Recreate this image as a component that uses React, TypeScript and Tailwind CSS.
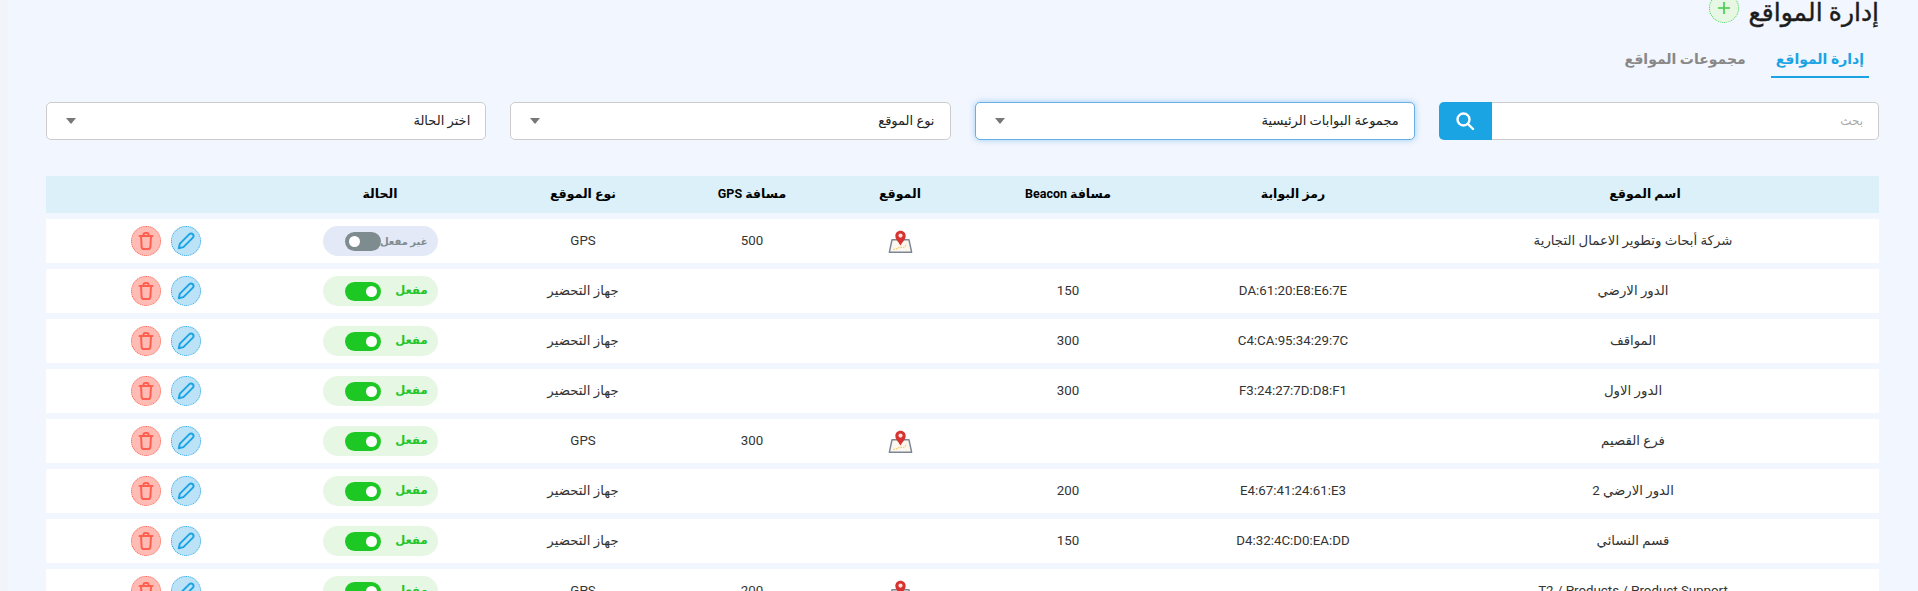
import React from "react";

type Row = { name: string; gate: string; beacon: string; map: boolean; gps: string; type: string; on: boolean };

const rows: Row[] = [
  { name: "شركة أبحاث وتطوير الاعمال التجارية", gate: "", beacon: "", map: true, gps: "500", type: "GPS", on: false },
  { name: "الدور الارضي", gate: "DA:61:20:E8:E6:7E", beacon: "150", map: false, gps: "", type: "جهاز التحضير", on: true },
  { name: "المواقف", gate: "C4:CA:95:34:29:7C", beacon: "300", map: false, gps: "", type: "جهاز التحضير", on: true },
  { name: "الدور الاول", gate: "F3:24:27:7D:D8:F1", beacon: "300", map: false, gps: "", type: "جهاز التحضير", on: true },
  { name: "فرع القصيم", gate: "", beacon: "", map: true, gps: "300", type: "GPS", on: true },
  { name: "الدور الارضي 2", gate: "E4:67:41:24:61:E3", beacon: "200", map: false, gps: "", type: "جهاز التحضير", on: true },
  { name: "قسم النسائي", gate: "D4:32:4C:D0:EA:DD", beacon: "150", map: false, gps: "", type: "جهاز التحضير", on: true },
  { name: "T2 / Products / Product Support", gate: "", beacon: "", map: true, gps: "200", type: "GPS", on: true },
];

const cols = "grid grid-cols-[492px_188px_262px_74px_222px_116px_290px_189px] items-center text-center";

function MapIcon() {
  return (
    <svg width="25" height="24" viewBox="0 0 28 26" className="mx-auto mt-[1px]">
      <path d="M4.5 10.5 H23.5 L26.5 24.5 H1.5 Z" fill="#fbf7ee" stroke="#7d8794" strokeWidth="1.6" strokeLinejoin="round" />
      <path d="M6 21 C9 22 11 19 14 19 C17 19 21 19 20 15" fill="none" stroke="#eebf5a" strokeWidth="1.2" strokeDasharray="1.6 1.2" />
      <path d="M14 0.5 C10.4 0.5 8.2 3.2 8.2 6.2 C8.2 10 12.3 13.5 14 17 C15.7 13.5 19.8 10 19.8 6.2 C19.8 3.2 17.6 0.5 14 0.5 Z" fill="#d8322f" />
      <circle cx="14" cy="5.8" r="2.3" fill="#fbe3e0" />
    </svg>
  );
}

function Toggle({ on }: { on: boolean }) {
  return (
    <div className={`mx-auto flex h-[30px] w-[115px] items-center justify-between rounded-[15px] pr-[10px] pl-[22px] ${on ? "bg-[#e6f8e3]" : "bg-[#e3e9f6]"}`}>
      <span className={`w-[47px] text-right font-bold whitespace-nowrap ${on ? "text-[11.5px] text-[#22c52a]" : "text-[10px] text-[#7f8c8f]"}`}>{on ? "مفعل" : "غير مفعل"}</span>
      <span className={`flex h-[19px] w-[36px] shrink-0 items-center rounded-full px-[4px] ${on ? "justify-start bg-[#1ec824]" : "justify-end bg-[#7f8c8f]"}`}>
        <span className="h-[11px] w-[11px] rounded-full bg-white" />
      </span>
    </div>
  );
}

function Actions() {
  return (
    <div className="flex items-center justify-end gap-[10px] pl-[85px]">
      <button className="flex h-[30px] w-[30px] items-center justify-center rounded-full border border-dotted border-[#1ba4e4] bg-[#bbe2f6]">
        <svg width="20" height="20" viewBox="0 0 20 20" fill="none" stroke="#1ba4e4" strokeWidth="2" strokeLinejoin="round" strokeLinecap="round">
          <path d="M2.8 17.2 L3.9 12.6 L13.4 3.1 C14.3 2.2 15.8 2.2 16.8 3.2 C17.8 4.2 17.8 5.7 16.9 6.6 L7.4 16.1 Z" />
        </svg>
      </button>
      <button className="flex h-[30px] w-[30px] items-center justify-center rounded-full border border-dotted border-[#ff5f50] bg-[#ffbcb5]">
        <svg width="18" height="20" viewBox="0 0 18 20" fill="none" stroke="#ff5f50" strokeWidth="2" strokeLinejoin="round" strokeLinecap="round">
          <path d="M2.5 5 H15.5" />
          <path d="M6.5 5 V3.6 C6.5 2.7 7.2 2 8.1 2 H9.9 C10.8 2 11.5 2.7 11.5 3.6 V5" />
          <path d="M4 5 L4.6 15.8 C4.7 17 5.6 18 6.8 18 H11.2 C12.4 18 13.3 17 13.4 15.8 L14 5" />
        </svg>
      </button>
    </div>
  );
}

function Select({ label, focus }: { label: string; focus?: boolean }) {
  return (
    <div className={`flex h-[38px] items-center justify-between rounded-[5px] border bg-white pr-[15px] pl-[19px] ${focus ? "border-[#66afe9] shadow-[0_0_6px_rgba(102,175,233,0.6)]" : "border-[#cccccc]"}`}>
      <span className="text-[13px] text-[#222]">{label}</span>
      <span className="h-0 w-0 border-x-[5px] border-t-[6px] border-x-transparent border-t-[#777]" />
    </div>
  );
}

export default function App() {
  return (
    <div dir="rtl" className="h-[591px] overflow-hidden border-l-[8px] border-[#f1f5f9] bg-[#f2f6fe] pr-[39px] pl-[38px] text-[#222] [font-family:'Roboto','DejaVu_Sans',sans-serif]">
      <div className="-mt-[7px] flex h-[30px] items-start gap-[9px]">
        <h1 className="mt-[5px] text-[25px] leading-[30px] font-normal whitespace-nowrap text-[#1c1c1c] [-webkit-text-stroke:0.4px_#1c1c1c]">إدارة المواقع</h1>
        <span className="flex h-[30px] w-[30px] shrink-0 items-center justify-center rounded-full border border-dotted border-[#3ed24a] bg-[#e6f8e3]">
          <svg width="14" height="14" viewBox="0 0 14 14" stroke="#3ecb46" strokeWidth="1.6"><path d="M7 1 V13 M1 7 H13" /></svg>
        </span>
      </div>
      <div className="mt-[24px] flex h-[31px] gap-[25px] pr-[10px]">
        <div className="border-b-2 border-[#1ba4e4] px-[5px] text-[14px] leading-[24px] font-bold text-[#1ba4e4]">إدارة المواقع</div>
        <div className="text-[14px] leading-[24px] font-bold text-[#888]">مجموعات المواقع</div>
      </div>
      <div className="mt-[24px] grid grid-cols-4 gap-[24px]">
        <div className="flex h-[38px]">
          <div className="flex flex-1 items-center rounded-r-[5px] border border-l-0 border-[#cccccc] bg-white pr-[15px] text-[12px] text-[#aaa]">بحث</div>
          <div className="flex w-[53px] items-center justify-center rounded-l-[5px] bg-[#1ba4e4]">
            <svg width="20" height="20" viewBox="0 0 20 20" fill="none" stroke="#fff" strokeWidth="2.4" strokeLinecap="round"><circle cx="8.5" cy="8.5" r="6" /><path d="M13 13 L18 18" /></svg>
          </div>
        </div>
        <Select label="مجموعة البوابات الرئيسية" focus />
        <Select label="نوع الموقع" />
        <Select label="اختر الحالة" />
      </div>
      <div className={`${cols} mt-[36px] h-[37px] bg-[#dcf0fa] text-[12.5px] font-bold text-black`}>
        <div className="pl-[24px]">اسم الموقع</div>
        <div>رمز البوابة</div>
        <div>مسافة Beacon</div>
        <div>الموقع</div>
        <div>مسافة GPS</div>
        <div>نوع الموقع</div>
        <div>الحالة</div>
        <div />
      </div>
      <div className="mt-[6px] flex flex-col gap-[6px]">
        {rows.map((r, i) => (
          <div key={i} className={`${cols} h-[44px] shrink-0 bg-white text-[13.3px] text-[#333]`}>
            <div>{r.name}</div>
            <div>{r.gate}</div>
            <div>{r.beacon}</div>
            <div>{r.map && <MapIcon />}</div>
            <div>{r.gps}</div>
            <div>{r.type}</div>
            <div><Toggle on={r.on} /></div>
            <div><Actions /></div>
          </div>
        ))}
      </div>
    </div>
  );
}
